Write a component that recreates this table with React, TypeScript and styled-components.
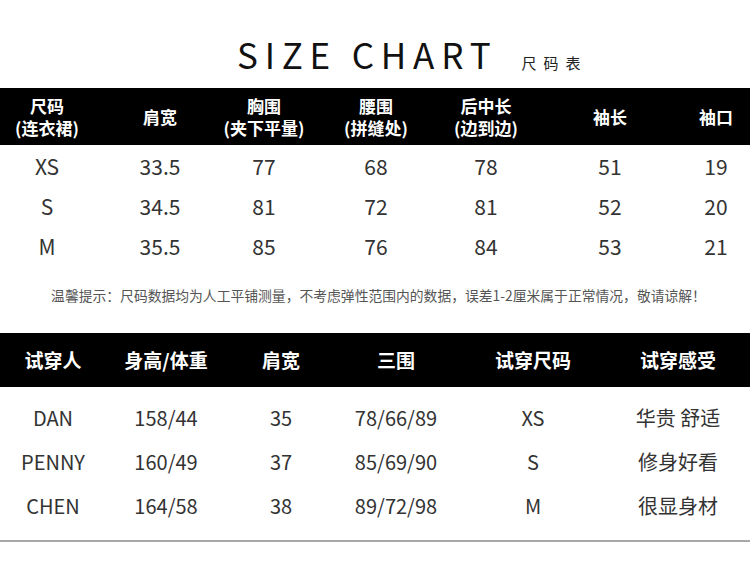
import styled, { createGlobalStyle } from 'styled-components';

const GlobalStyle = createGlobalStyle`
  body {
    margin: 0;
    background: #fff;
    font-family: "Noto Sans CJK SC", "Noto Sans", sans-serif;
  }
`;

const Page = styled.div`
  width: 750px;
  height: 566px;
  overflow: hidden;
  background: #fff;
  display: flex;
  flex-direction: column;
`;

const TitleRow = styled.div`
  height: 88px;
  box-sizing: border-box;
  padding: 36px 0 0 237px;
  display: flex;
  align-items: baseline;
`;

const Title = styled.h1`
  margin: 0;
  font-size: 35px;
  line-height: 35px;
  font-weight: 400;
  letter-spacing: 6.8px;
  color: #111;
`;

const SubTitle = styled.span`
  margin-left: 24px;
  font-size: 15px;
  letter-spacing: 7px;
  color: #222;
`;

const Grid = styled.div<{ $cols: string; $height: number }>`
  display: grid;
  grid-template-columns: ${(p) => p.$cols};
  height: ${(p) => p.$height}px;
  align-items: center;
`;

const HeadBar = styled(Grid)`
  background: #000;
  color: #fff;
  font-weight: 700;
`;

const Cell = styled.div<{ $size: number; $lh?: number }>`
  display: flex;
  flex-direction: column;
  align-items: center;
  min-width: 0;
  white-space: nowrap;
  font-size: ${(p) => p.$size}px;
  line-height: ${(p) => p.$lh ?? Math.round(p.$size * 1.25)}px;
`;

const DataCell = styled(Cell)`
  color: #333;
`;

const Body = styled.div<{ $pad: number }>`
  padding-top: ${(p) => p.$pad}px;
`;

const Note = styled.p`
  margin: 19px 0 28px;
  padding-left: 7px;
  text-align: center;
  font-size: 13.8px;
  line-height: 20px;
  color: #555;
`;

const Rule = styled.hr`
  margin: 13px 0 0;
  border: none;
  border-top: 2px solid #a8a8a8;
`;

const sizeCols = '94px 132px 76px 148px 72px 176px 36px';
const fitCols = '106px 120px 110px 120px 154px 136px';

const sizeHead = [
  ['尺码', '(连衣裙)'],
  ['肩宽'],
  ['胸围', '(夹下平量)'],
  ['腰围', '(拼缝处)'],
  ['后中长', '(边到边)'],
  ['袖长'],
  ['袖口'],
];

const sizeRows = [
  ['XS', '33.5', '77', '68', '78', '51', '19'],
  ['S', '34.5', '81', '72', '81', '52', '20'],
  ['M', '35.5', '85', '76', '84', '53', '21'],
];

const fitHead = ['试穿人', '身高/体重', '肩宽', '三围', '试穿尺码', '试穿感受'];

const fitRows = [
  ['DAN', '158/44', '35', '78/66/89', 'XS', '华贵 舒适'],
  ['PENNY', '160/49', '37', '85/69/90', 'S', '修身好看'],
  ['CHEN', '164/58', '38', '89/72/98', 'M', '很显身材'],
];

const App = () => {
  return (
    <Page>
      <GlobalStyle />
      <TitleRow>
        <Title>SIZE CHART</Title>
        <SubTitle>尺码表</SubTitle>
      </TitleRow>

      <HeadBar $cols={sizeCols} $height={57}>
        {sizeHead.map((lines, i) => (
          <Cell key={i} $size={17} $lh={22}>
            {lines.map((l) => (
              <span key={l}>{l}</span>
            ))}
          </Cell>
        ))}
      </HeadBar>
      <Body $pad={1}>
        {sizeRows.map((row) => (
          <Grid key={row[0]} $cols={sizeCols} $height={40}>
            {row.map((v, i) => (
              <DataCell key={i} $size={21}>
                {v}
              </DataCell>
            ))}
          </Grid>
        ))}
      </Body>

      <Note>
        温馨提示：尺码数据均为人工平铺测量，不考虑弹性范围内的数据，误差1-2厘米属于正常情况，敬请谅解！
      </Note>

      <HeadBar $cols={fitCols} $height={54}>
        {fitHead.map((h) => (
          <Cell key={h} $size={19}>
            {h}
          </Cell>
        ))}
      </HeadBar>
      <Body $pad={8}>
        {fitRows.map((row) => (
          <Grid key={row[0]} $cols={fitCols} $height={44}>
            {row.map((v, i) => (
              <DataCell key={i} $size={20}>
                {v}
              </DataCell>
            ))}
          </Grid>
        ))}
      </Body>
      <Rule />
    </Page>
  );
};

export default App;
